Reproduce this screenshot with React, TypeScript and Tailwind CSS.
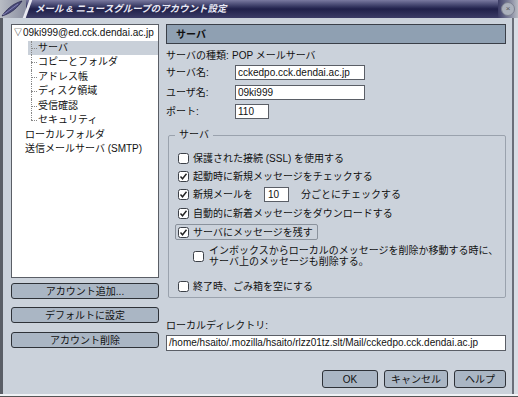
import React from 'react';

const jp = { fontFamily: '"Liberation Sans", "Noto Sans CJK JP", sans-serif' };

function Check({ checked }: { checked?: boolean }) {
    return (
        <svg width="11" height="11" viewBox="0 0 11 11" className="shrink-0">
            <rect x="0.5" y="0.5" width="10" height="10" rx="2" fill="#fff" stroke="#3c4148" />
            {checked && <path d="M2.5 5.5 L4.5 7.8 L8.5 2.8" fill="none" stroke="#222" strokeWidth="1.4" />}
        </svg>
    );
}

function Btn({ children, className = '' }: { children: React.ReactNode; className?: string }) {
    return (
        <div className={`flex items-center justify-center rounded-[3px] border border-[#2e3238] bg-[#aab6c4] text-[10px] text-[#111] ${className}`}>
            {children}
        </div>
    );
}

export default function App() {
    const tree = ['サーバ', 'コピーとフォルダ', 'アドレス帳', 'ディスク領域', '受信確認', 'セキュリティ'];
    return (
        <div className="w-[518px] h-[397px] bg-[#cbd2db] relative overflow-hidden text-[#111] whitespace-nowrap" style={jp}>
            {/* title bar */}
            <div className="h-[18px] flex items-stretch bg-gradient-to-b from-[#7a7aa0] via-[#20204a] to-[#3c3c66]">
                <div className="w-[26px] bg-gradient-to-r from-[#b8bcc4] to-[#8a8ea0] relative">
                    <svg width="24" height="18" viewBox="0 0 24 18" className="absolute left-0 top-0">
                        <path d="M2 16 C6 10 12 4 22 1 C18 7 12 13 2 16 Z" fill="#4a4a7a" stroke="#2a2a50" strokeWidth="0.8" />
                        <path d="M3 15 L18 4" stroke="#9090c0" strokeWidth="0.8" />
                    </svg>
                </div>
                <div className="w-[3px] bg-[#e8e8f0] skew-x-[-20deg]" />
                <div className="flex-1 flex items-center pl-[6px] text-[9.5px] font-bold italic text-[#e8e8f4]">
                    メール & ニュースグループのアカウント設定
                </div>
                <div className="w-[20px] flex items-center justify-center bg-gradient-to-r from-[#3c3c66] to-[#b8bcc4]">
                    <div className="w-[14px] h-[14px] rounded-full bg-[#aab0bc] border border-[#7c8090] flex items-center justify-center text-[8px] text-[#555]">
                        ×
                    </div>
                </div>
            </div>

            <div className="absolute left-0 top-[18px] bottom-0 w-[3px] bg-[#5a5e66]" />
            <div className="absolute right-0 top-[18px] bottom-0 w-[6px] border-l-2 border-[#6a6e78] bg-[#d8dde4]" />
            <div className="absolute left-0 right-0 bottom-0 h-[3px] bg-[#f0f2f5] border-b border-[#555]" />

            <div className="flex pl-[11px] pt-[6px] text-[10px]">
                {/* left column */}
                <div className="w-[148px] flex flex-col">
                    <div className="h-[254px] bg-white border border-[#5a5e66] pt-[1px] leading-[14.5px]">
                        <div className="flex items-center pl-[2px]">
                            <span className="text-[8px] mr-[1px]">▽</span>
                            <span>09ki999@ed.cck.dendai.ac.jp</span>
                        </div>
                        {tree.map((t, i) => (
                            <div key={t} className={`flex items-center h-[14.5px] ml-[16px] ${i === 0 ? 'bg-[#c9d0d9]' : ''}`}>
                                <div className="relative w-[10px] h-full">
                                    <div className={`absolute left-[3px] top-0 border-l border-dotted border-[#888] ${i === tree.length - 1 ? 'h-1/2' : 'h-full'}`} />
                                    <div className="absolute left-[3px] top-1/2 w-[6px] border-t border-dotted border-[#888]" />
                                </div>
                                <span>{t}</span>
                            </div>
                        ))}
                        <div className="pl-[13px]">ローカルフォルダ</div>
                        <div className="pl-[13px]">送信メールサーバ (SMTP)</div>
                    </div>
                    <Btn className="h-[16px] mt-[5px]">アカウント追加...</Btn>
                    <Btn className="h-[16px] mt-[8px]">デフォルトに設定</Btn>
                    <Btn className="h-[16px] mt-[9px]">アカウント削除</Btn>
                </div>

                {/* right column */}
                <div className="w-[340px] ml-[7px] flex flex-col">
                    <div className="h-[20px] bg-[#8fa0b2] border border-[#3a3f48] flex items-center pl-[9px] font-bold">
                        サーバ
                    </div>
                    <div className="flex items-center h-[14px] mt-[4px]">
                        <span className="w-[66px] shrink-0">サーバの種類:</span>
                        <span>POP メールサーバ</span>
                    </div>
                    <div className="flex items-center mt-[3px]">
                        <span className="w-[69px] shrink-0">サーバ名:</span>
                        <div className="w-[130px] h-[15px] bg-white border border-[#5a5e66] px-[2px] leading-[13px]">cckedpo.cck.dendai.ac.jp</div>
                    </div>
                    <div className="flex items-center mt-[5px]">
                        <span className="w-[69px] shrink-0">ユーザ名:</span>
                        <div className="w-[130px] h-[15px] bg-white border border-[#5a5e66] px-[2px] leading-[13px]">09ki999</div>
                    </div>
                    <div className="flex items-center mt-[4px]">
                        <span className="w-[69px] shrink-0">ポート:</span>
                        <div className="w-[34px] h-[15px] bg-white border border-[#5a5e66] px-[2px] leading-[13px]">110</div>
                    </div>

                    <div className="relative mt-[16px] ml-[2px] h-[163px] border border-[#9aa2ad] rounded-[2px] pl-[9px] pt-[13px]">
                        <span className="absolute left-[6px] top-[-8px] bg-[#cbd2db] px-[4px] leading-[14px]">サーバ</span>
                        <div className="flex items-center gap-[4px] h-[18px]"><Check />保護された接続 (SSL) を使用する</div>
                        <div className="flex items-center gap-[4px] h-[18px]"><Check checked />起動時に新規メッセージをチェックする</div>
                        <div className="flex items-center gap-[4px] h-[19px]">
                            <Check checked />新規メールを
                            <div className="ml-[7px] w-[25px] h-[15px] bg-white border border-[#5a5e66] px-[3px] leading-[13px]">10</div>
                            <span className="ml-[8px]">分ごとにチェックする</span>
                        </div>
                        <div className="flex items-center gap-[4px] h-[19px]"><Check checked />自動的に新着メッセージをダウンロードする</div>
                        <div className="flex items-center gap-[4px] h-[16px] w-[143px] -ml-[3px] pl-[2px] mt-[1px] border border-[#8a929c] rounded-[2px]">
                            <Check checked />サーバにメッセージを残す
                        </div>
                        <div className="flex items-center gap-[5px] ml-[15px] mt-[5px] leading-[11px]">
                            <Check />
                            <div>
                                <div>インボックスからローカルのメッセージを削除か移動する時に、</div>
                                <div>サーバ上のメッセージも削除する。</div>
                            </div>
                        </div>
                        <div className="flex items-center gap-[4px] h-[18px] mt-[10px]"><Check />終了時、ごみ箱を空にする</div>
                    </div>

                    <div className="mt-[20px] h-[14px] flex items-center">ローカルディレクトリ:</div>
                    <div className="mt-[3px] h-[16px] bg-white border border-[#5a5e66] px-[2px] leading-[14px]">
                        /home/hsaito/.mozilla/hsaito/rlzz01tz.slt/Mail/cckedpo.cck.dendai.ac.jp
                    </div>

                    <div className="flex justify-end gap-[6px] mt-[19px]">
                        <Btn className="w-[56px] h-[18px] border-[1.5px]">OK</Btn>
                        <Btn className="w-[64px] h-[18px]">キャンセル</Btn>
                        <Btn className="w-[52px] h-[18px]">ヘルプ</Btn>
                    </div>
                </div>
            </div>
        </div>
    );
}
